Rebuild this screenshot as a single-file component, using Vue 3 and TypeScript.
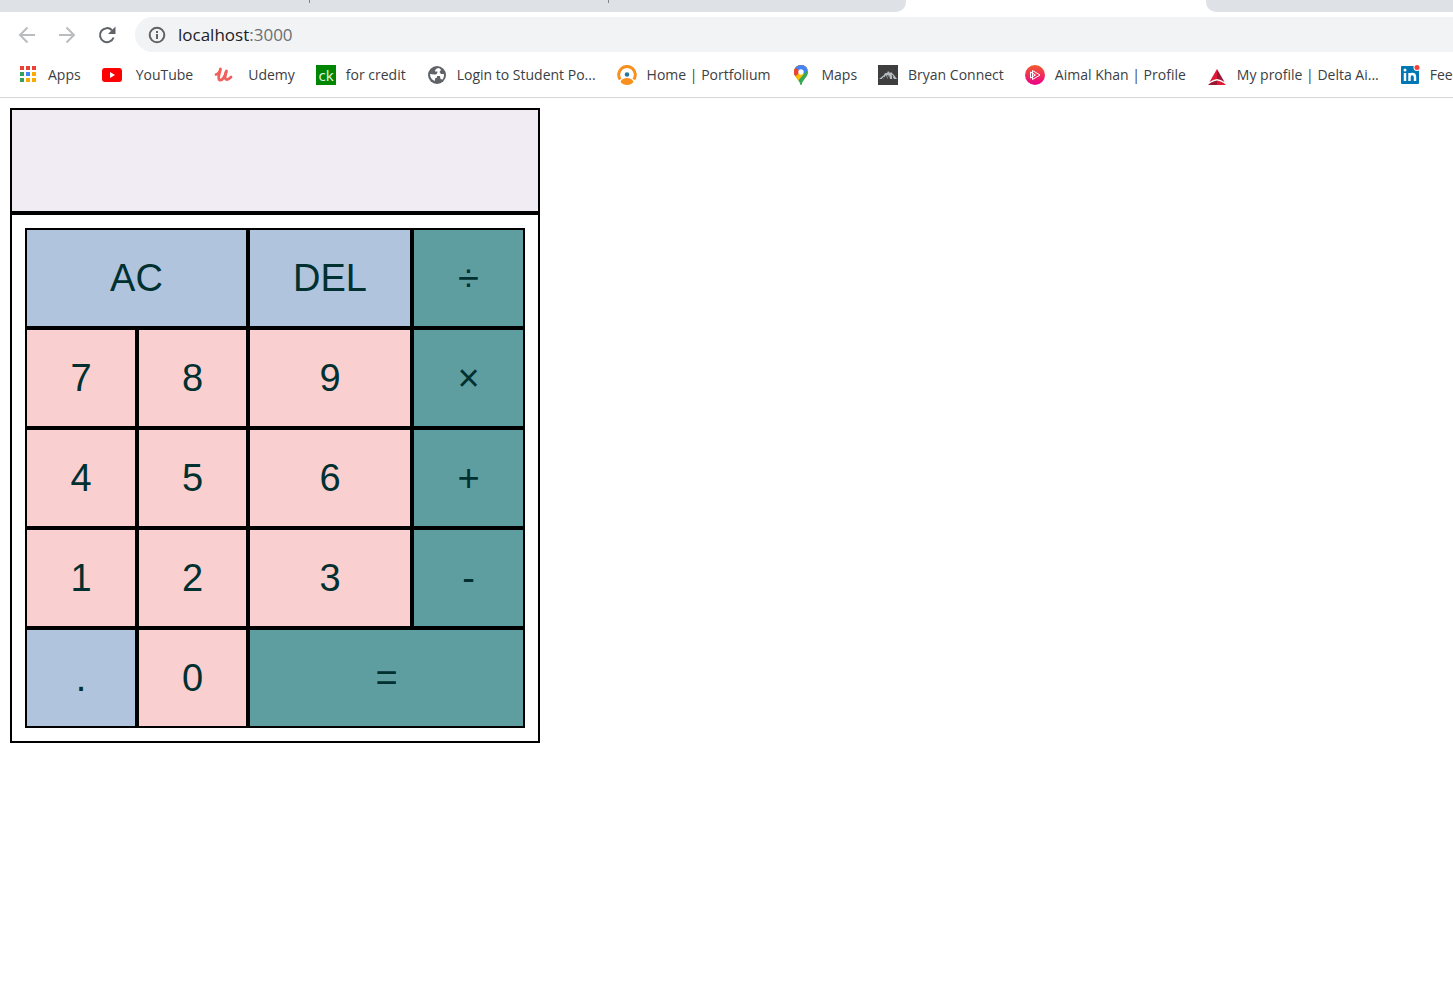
<script setup lang="ts">
import { ref } from 'vue'

interface Key {
  label: string
  kind: 'digit' | 'tool' | 'operator'
  wide?: boolean
}

interface Bookmark {
  icon: string
  title: string
}

const bookmarks: Bookmark[] = [
  { icon: 'apps', title: 'Apps' },
  { icon: 'youtube', title: 'YouTube' },
  { icon: 'udemy', title: 'Udemy' },
  { icon: 'ck', title: 'for credit' },
  { icon: 'globe', title: 'Login to Student Po...' },
  { icon: 'portfolium', title: 'Home | Portfolium' },
  { icon: 'maps', title: 'Maps' },
  { icon: 'bryan', title: 'Bryan Connect' },
  { icon: 'pluralsight', title: 'Aimal Khan | Profile' },
  { icon: 'delta', title: 'My profile | Delta Ai...' },
  { icon: 'linkedin', title: 'Feed' },
]

const appDots = ['#ea4335', '#ea4335', '#ea4335', '#34a058', '#4285f4', '#fbaa05', '#34a058', '#fbaa05', '#fbaa05']

const keys: Key[] = [
  { label: 'AC', kind: 'tool', wide: true },
  { label: 'DEL', kind: 'tool' },
  { label: '÷', kind: 'operator' },
  { label: '7', kind: 'digit' },
  { label: '8', kind: 'digit' },
  { label: '9', kind: 'digit' },
  { label: '×', kind: 'operator' },
  { label: '4', kind: 'digit' },
  { label: '5', kind: 'digit' },
  { label: '6', kind: 'digit' },
  { label: '+', kind: 'operator' },
  { label: '1', kind: 'digit' },
  { label: '2', kind: 'digit' },
  { label: '3', kind: 'digit' },
  { label: '-', kind: 'operator' },
  { label: '.', kind: 'tool' },
  { label: '0', kind: 'digit' },
  { label: '=', kind: 'operator', wide: true },
]

const expression = ref('')

function evaluate(source: string): string {
  const parts = source.match(/(\d+\.?\d*|\.\d+|[÷×+-])/g) ?? []
  const values: number[] = []
  let operator = '+'
  for (const part of parts) {
    if (/^[÷×+-]$/.test(part)) {
      operator = part
      continue
    }
    const n = Number(part)
    if (operator === '+') values.push(n)
    else if (operator === '-') values.push(-n)
    else {
      const last = values.pop() ?? 0
      values.push(operator === '×' ? last * n : last / n)
    }
  }
  return values.length ? String(values.reduce((a, b) => a + b, 0)) : ''
}

function press(key: Key) {
  if (key.label === 'AC') expression.value = ''
  else if (key.label === 'DEL') expression.value = expression.value.slice(0, -1)
  else if (key.label === '=') expression.value = evaluate(expression.value)
  else expression.value += key.label
}
</script>

<template>
  <div class="window">
    <header class="chrome">
      <div class="tabs">
        <div class="strip strip-left"><i class="divider"></i><i class="divider"></i></div>
        <div class="active-tab"></div>
        <div class="strip strip-right"></div>
      </div>

      <div class="toolbar">
        <button class="nav faded" type="button" aria-label="Back">
          <svg viewBox="0 0 20 20"><path d="M18 10H3M10.500 2.500L3 10l7.500 7.500" /></svg>
        </button>
        <button class="nav faded" type="button" aria-label="Forward">
          <svg viewBox="0 0 20 20"><path d="M2 10h15M9.500 2.500L17 10l-7.500 7.500" /></svg>
        </button>
        <button class="nav" type="button" aria-label="Reload">
          <svg viewBox="0 0 20 20"><path d="M16.600 12.500A7 7 0 1 1 15 5.200" /><path class="solid" d="M18.500 1.500v7.500h-7.500z" /></svg>
        </button>
        <div class="address">
          <svg class="info" viewBox="0 0 18 18">
            <circle cx="9" cy="9" r="7.300" />
            <path d="M9 8v5M9 5v1.900" />
          </svg>
          <a class="url" href="#">localhost<span>:3000</span></a>
        </div>
      </div>

      <nav class="bookmarks" aria-label="Bookmarks">
        <a v-for="b in bookmarks" :key="b.title" class="bookmark" :class="b.icon" href="#">
          <svg v-if="b.icon === 'apps'" viewBox="0 0 20 20">
            <rect v-for="(c, i) in appDots" :key="i" :x="2 + (i % 3) * 6" :y="1 + Math.floor(i / 3) * 6" width="4" height="4" :fill="c" />
          </svg>
          <svg v-else-if="b.icon === 'youtube'" viewBox="0 0 20 20">
            <rect y="3" width="20" height="14" rx="3" fill="#f00" /><path d="M8 7l5 3-5 3z" fill="#fff" />
          </svg>
          <svg v-else-if="b.icon === 'udemy'" viewBox="0 0 20 20" fill="none" stroke="#f15f5f" stroke-linecap="round" stroke-linejoin="round">
            <path d="M2 9.500C4 9 6 6 6.500 4C6 8 3 13.500 5.500 15c3 1 5.500-4 6.500-8" stroke-width="2.800" />
            <path d="M12.500 6c-1 3-2.500 8 0 8.500 2 .300 3-1 4.500-2.500" stroke-width="2.800" />
          </svg>
          <svg v-else-if="b.icon === 'ck'" viewBox="0 0 20 20">
            <rect width="20" height="20" fill="#008600" />
            <text x="10" y="16" text-anchor="middle" font-size="15" fill="#e8f5e8">ck</text>
          </svg>
          <svg v-else-if="b.icon === 'globe'" viewBox="0 0 20 20">
            <circle cx="10" cy="10" r="9" fill="#5f6368" />
            <path d="M11.500 3C9 3.500 8 4.500 8 6.500h2.500C10.500 9 9.500 9.500 7 9.500L3 9c0 3.500 2 6 5 7v-2.500l2-1v-1.500h3l.500 3 2 .500c1.200-1.500 1.700-3.500 1.400-5.500H14l-1.500-2 1.500-2c-.500-1.200-1.500-1.700-2.500-2z" fill="#fff" />
          </svg>
          <svg v-else-if="b.icon === 'portfolium'" viewBox="0 0 20 20">
            <path d="M3.200 14.500a8.300 8.300 0 1 1 13.600 0" fill="none" stroke="#f7901e" stroke-width="3" />
            <circle cx="10" cy="9.500" r="2.300" fill="#2279a0" />
            <path d="M3.500 17c1-3 3.500-4 6.500-4s5.500 1 6.500 4c-3 4-10 4-13 0z" fill="#f7901e" />
          </svg>
          <svg v-else-if="b.icon === 'maps'" viewBox="0 0 20 20">
            <defs><clipPath id="pin"><path d="M10 0a7 7 0 0 0-7 7c0 5 5 7 6.300 12.400.200.800 1.200.800 1.400 0C12 14 17 12 17 7a7 7 0 0 0-7-7z" /></clipPath></defs>
            <g clip-path="url(#pin)">
              <path d="M0 0h20v20H0z" fill="#34a853" /><path d="M0 0h20L3 16H0z" fill="#fbbc04" />
              <path d="M0 0h20L10 7 6 12 0 8z" fill="#ea4335" /><path d="M4 0h14v4l-8 7-6-7z" fill="#4285f4" />
              <path d="M0 1l5 2 5 4-4 4-5-1z" fill="#ea4335" /><path d="M2 9l3 2 3-3 5 1-7 8z" fill="#fbbc04" />
            </g>
            <circle cx="10" cy="7" r="2.700" fill="#fff" />
          </svg>
          <svg v-else-if="b.icon === 'bryan'" viewBox="0 0 20 20">
            <rect width="20" height="20" fill="#3e3e3e" />
            <path d="M1 14l5-4 1-2 2 0 1-2 2 2 1-1 3 3 3 4h-3l-2-3v3h-2l-1-4-2 4-1-4-3 4z" fill="#b4babd" />
            <path d="M4 14l2-2M10 10l-2 4M14 10l1 2" stroke="#3e3e3e" />
          </svg>
          <svg v-else-if="b.icon === 'pluralsight'" viewBox="0 0 20 20">
            <defs><linearGradient id="sunset" x2="0" y2="1"><stop stop-color="#f15b2a" /><stop offset="1" stop-color="#ec008c" /></linearGradient></defs>
            <circle cx="10" cy="10" r="10" fill="url(#sunset)" />
            <path d="M7.500 5.500l7.500 4.500-7.500 4.500zM5.500 7l5 3-5 3z" fill="none" stroke="#fff" />
          </svg>
          <svg v-else-if="b.icon === 'delta'" viewBox="0 0 20 20">
            <path d="M10 4v10q-4 .500-7.500 3z" fill="#e31837" /><path d="M10 4v10q4 .500 7.500 3z" fill="#991933" />
            <path d="M10 15.500V20H1q3-3.500 9-4.500z" fill="#991933" /><path d="M10 15.500V20h9q-3-3.500-9-4.500z" fill="#e31837" />
          </svg>
          <svg v-else viewBox="0 0 20 20">
            <rect x="1" y="1" width="18" height="18" rx="1" fill="#0077b5" />
            <path d="M5 8v8M9.500 16V8M9.500 12c0-4 5.500-4 5.500 0v4" fill="none" stroke="#fff" stroke-width="2.400" />
            <circle cx="5" cy="5" r="1.500" fill="#fff" />
            <circle cx="17" cy="2.500" r="3.500" fill="#fff" /><circle cx="17" cy="2.500" r="2.500" fill="#f44336" />
          </svg>
          <span>{{ b.title }}</span>
        </a>
      </nav>
    </header>

    <main class="calculator">
      <output class="display" aria-label="Result">{{ expression }}</output>
      <div class="keypad">
        <button v-for="key in keys" :key="key.label" type="button" class="key" :class="[key.kind, { wide: key.wide }]" @click="press(key)">
          {{ key.label }}
        </button>
      </div>
    </main>
  </div>
</template>

<style>
body {
  background: #fff;
  overflow-x: hidden;
}
</style>

<style scoped>
.window {
  font-family: "Open Sans", "Noto Sans", sans-serif;
}

.chrome {
  overflow: hidden;
  border-bottom: 1px solid #d5d7da;
}

.tabs {
  display: flex;
  height: 12px;
}

.strip {
  background: #dee1e6;
}

.strip-left {
  display: flex;
  justify-content: flex-end;
  gap: 298px;
  width: 906px;
  padding-right: 297px;
  box-sizing: border-box;
  border-bottom-right-radius: 10px;
}

.divider {
  width: 1px;
  height: 3px;
  background: #80868b;
}

.active-tab {
  width: 300px;
}

.strip-right {
  flex: 1;
  border-bottom-left-radius: 10px;
}

.toolbar {
  display: flex;
  align-items: center;
  padding: 5px 0 0 17px;
}

.nav {
  width: 20px;
  height: 20px;
  margin-right: 20px;
  padding: 0;
  border: 0;
  background: none;
  color: #5f6368;
}

.nav.faded {
  color: #babcbe;
}

.nav svg {
  display: block;
  fill: none;
  stroke: currentColor;
  stroke-width: 2;
}

.nav .solid {
  fill: currentColor;
  stroke: none;
}

.nav:nth-child(3) {
  margin-right: 18px;
}

.address {
  display: flex;
  flex: 1;
  align-items: center;
  gap: 12px;
  height: 35px;
  padding-left: 13px;
  border-radius: 18px 0 0 18px;
  background: #f1f3f4;
}

.info {
  width: 18px;
  height: 18px;
  fill: none;
  stroke: #5f6368;
  stroke-width: 2;
}

.url {
  color: #202124;
  font-size: 17px;
  text-decoration: none;
}

.url span {
  color: #6b6f73;
}

.bookmarks {
  display: flex;
  gap: 21px;
  height: 45px;
  padding-left: 18px;
}

.bookmark {
  display: flex;
  flex: none;
  align-items: center;
  gap: 10px;
  color: #3c4043;
  font-size: 14px;
  line-height: 20px;
  text-decoration: none;
  white-space: nowrap;
}

.bookmark.youtube,
.bookmark.udemy {
  gap: 14px;
}

.bookmark svg {
  width: 20px;
  height: 20px;
}

.calculator {
  width: 530px;
  margin: 10px;
}

.display {
  display: block;
  box-sizing: border-box;
  height: 105px;
  padding: 28px 12px;
  border: 2px solid #000;
  background: #f1ecf3;
  color: #002b2b;
  font: 38px/44px "Liberation Sans", Arial, sans-serif;
  text-align: right;
  overflow: hidden;
}

.keypad {
  display: grid;
  grid-template-columns: 112px 111px 164px 1fr;
  grid-auto-rows: 100px;
  padding: 13px;
  border: 2px solid #000;
}

.key {
  padding: 0;
  border: 2px solid #000;
  border-radius: 0;
  color: #003030;
  font: 38px/44px "Liberation Sans", Arial, sans-serif;
}

.key.wide {
  grid-column: span 2;
}

.digit {
  background: #facfcf;
}

.tool {
  background: #b0c4de;
}

.operator {
  background: #5f9ea0;
}
</style>
